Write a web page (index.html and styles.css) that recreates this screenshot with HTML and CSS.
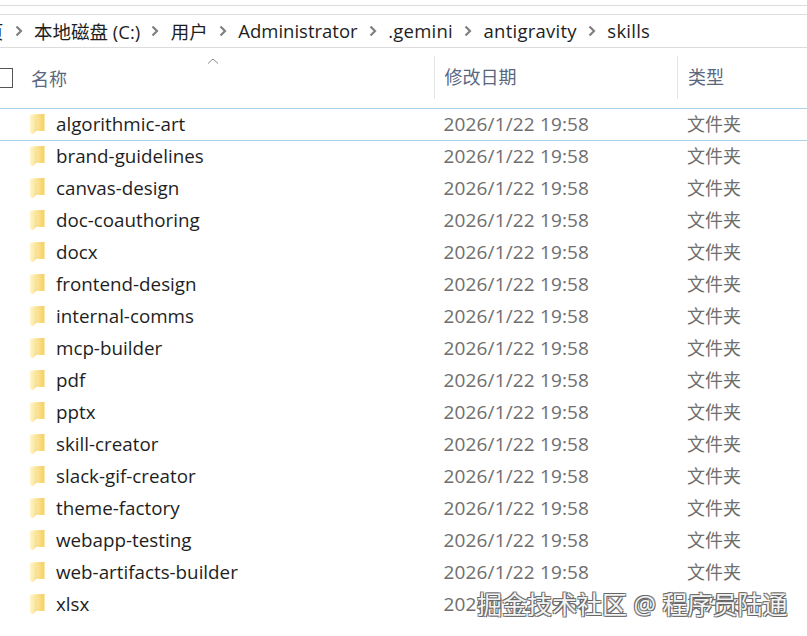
FILE: index.html
```html
<!DOCTYPE html>
<html lang="en">
<head>
    <meta charset="UTF-8">
    <title>skills</title>
    <link rel="stylesheet" href="styles.css">
</head>
<body>
    <div class="topbar"></div>

    <!-- address bar -->
    <div class="crumbs">
        <span class="crumb first">页</span>
        <svg class="sep" viewBox="0 0 8 12"><path d="M1.500 1.500 6 6l-4.500 4.500"/></svg>
        <span class="crumb">本地磁盘 (C:)</span>
        <svg class="sep" viewBox="0 0 8 12"><path d="M1.500 1.500 6 6l-4.500 4.500"/></svg>
        <span class="crumb">用户</span>
        <svg class="sep" viewBox="0 0 8 12"><path d="M1.500 1.500 6 6l-4.500 4.500"/></svg>
        <span class="crumb">Administrator</span>
        <svg class="sep" viewBox="0 0 8 12"><path d="M1.500 1.500 6 6l-4.500 4.500"/></svg>
        <span class="crumb wide">.gemini</span>
        <svg class="sep" viewBox="0 0 8 12"><path d="M1.500 1.500 6 6l-4.500 4.500"/></svg>
        <span class="crumb wide">antigravity</span>
        <svg class="sep" viewBox="0 0 8 12"><path d="M1.500 1.500 6 6l-4.500 4.500"/></svg>
        <span class="crumb wide">skills</span>
    </div>

    <!-- column headers -->
    <div class="header">
        <div class="col-name head-name">
            <span class="checkbox"></span>
            <span>名称</span>
            <svg class="sort" viewBox="0 0 12 6"><path d="M1 5.500 6 1l5 4.500"/></svg>
        </div>
        <div class="col-date head-cell">修改日期</div>
        <div class="col-type head-cell">类型</div>
    </div>

    <svg class="defs" width="0" height="0">
        <linearGradient id="folderFill" x1="0" y1="0" x2="1" y2="0">
            <stop offset="0" stop-color="#fff4c8"/>
            <stop offset="0.45" stop-color="#fbe59a"/>
            <stop offset="1" stop-color="#f4d062"/>
        </linearGradient>
    </svg>

    <div class="list" id="list"></div>

    <div class="watermark">掘金技术社区 @ 程序员陆通</div>

    <script>
        // Folder rows all share the same date and type
        var folders = ['algorithmic-art', 'brand-guidelines', 'canvas-design', 'doc-coauthoring', 'docx',
            'frontend-design', 'internal-comms', 'mcp-builder', 'pdf', 'pptx', 'skill-creator',
            'slack-gif-creator', 'theme-factory', 'webapp-testing', 'web-artifacts-builder', 'xlsx'];

        var icon = '<svg class="folder" viewBox="0 0 15 21">' +
            '<path d="M0 1 7 0h7.500v17H5.500L2 20.500 0 18z" fill="url(#folderFill)"/>' +
            '<path d="M5.500 1.500 6.500 17 2 20.500 5 17z" fill="#f7dc8a"/>' +
            '</svg>';

        document.getElementById('list').innerHTML = folders.map(function (name, i) {
            return '<div class="row' + (i === 0 ? ' selected' : '') + '">' +
                '<div class="col-name">' + icon + '<span>' + name + '</span></div>' +
                '<div class="col-date">2026/1/22 19:58</div>' +
                '<div class="col-type">文件夹</div>' +
                '</div>';
        }).join('');
    </script>
</body>
</html>
```
FILE: styles.css
```css
html, body {
    height: 100%;
}

body {
    margin: 0;
    background-color: #fff;
    font-family: "Open Sans", "Noto Sans", "Noto Sans CJK SC", sans-serif;
    overflow: hidden;
    position: relative;
}

.topbar {
    height: 5px;
    border-bottom: 1px solid #dcdcdc;
}

.crumbs {
    display: flex;
    align-items: center;
    height: 34px;
    margin-top: 8px;
    padding-bottom: 1px;
    box-sizing: border-box;
    border-top: 1px solid #dcdcdc;
    border-bottom: 1px solid #dcdcdc;
    font-size: 18.500px;
    color: #1e1e1e;
    white-space: nowrap;
    overflow: hidden;
}

.crumb.first {
    margin-left: -15px;
}

.crumb.wide {
    letter-spacing: 0.250px;
}

.sep {
    width: 8px;
    height: 12px;
    margin: 0 11.500px 0 11px;
    flex-shrink: 0;
}

.sep path {
    fill: none;
    stroke: #808080;
    stroke-width: 2.200;
}

.header {
    display: flex;
    height: 60px;
    font-size: 18px;
    color: #5a6780;
    position: relative;
}

.head-name {
    position: relative;
}

.head-cell {
    margin-top: 8px;
    height: 43px;
    line-height: 42px;
    border-left: 1px solid #e5e5e5;
    padding-left: 9px;
    box-sizing: border-box;
}

.col-name {
    width: 434px;
    display: flex;
    align-items: center;
    flex-shrink: 0;
}

.col-date {
    width: 243px;
    padding-left: 9.500px;
    box-sizing: border-box;
    flex-shrink: 0;
}

.col-type {
    flex: 1;
    padding-left: 10px;
}

.checkbox {
    width: 13px;
    height: 20px;
    margin: 0 18px 0 0;
    border: 1px solid #555;
    border-left: none;
    box-sizing: border-box;
}

.sort {
    position: absolute;
    left: 207px;
    top: 10px;
    width: 12px;
    height: 6px;
}

.sort path {
    fill: none;
    stroke: #8a8a8a;
    stroke-width: 1;
}

.defs {
    position: absolute;
}

.row {
    display: flex;
    align-items: center;
    height: 32px;
    font-size: 18.800px;
    box-sizing: border-box;
}

.row.selected {
    border-top: 1px solid #a9d3ea;
    border-bottom: 1px solid #a9d3ea;
    height: 33px;
    padding-bottom: 1px;
    margin-bottom: -1px;
}

.row .col-name {
    color: #1e1e1e;
    padding-left: 30px;
    box-sizing: border-box;
}

.row .col-date {
    color: #6e6e6e;
    font-size: 19px;
    letter-spacing: 0.150px;
}

.row .col-type {
    color: #6e6e6e;
    font-size: 18px;
    padding-bottom: 2px;
}

.folder {
    width: 15px;
    height: 21px;
    margin-right: 11px;
    flex-shrink: 0;
}

.watermark {
    position: absolute;
    left: 477px;
    top: 585px;
    font-size: 25px;
    color: #f4f4f4;
    white-space: nowrap;
    text-shadow: -1px -1px 0 #666, 1px 1px 0 #666, 1px -1px 0 #888, -1px 1px 0 #888;
}
```
